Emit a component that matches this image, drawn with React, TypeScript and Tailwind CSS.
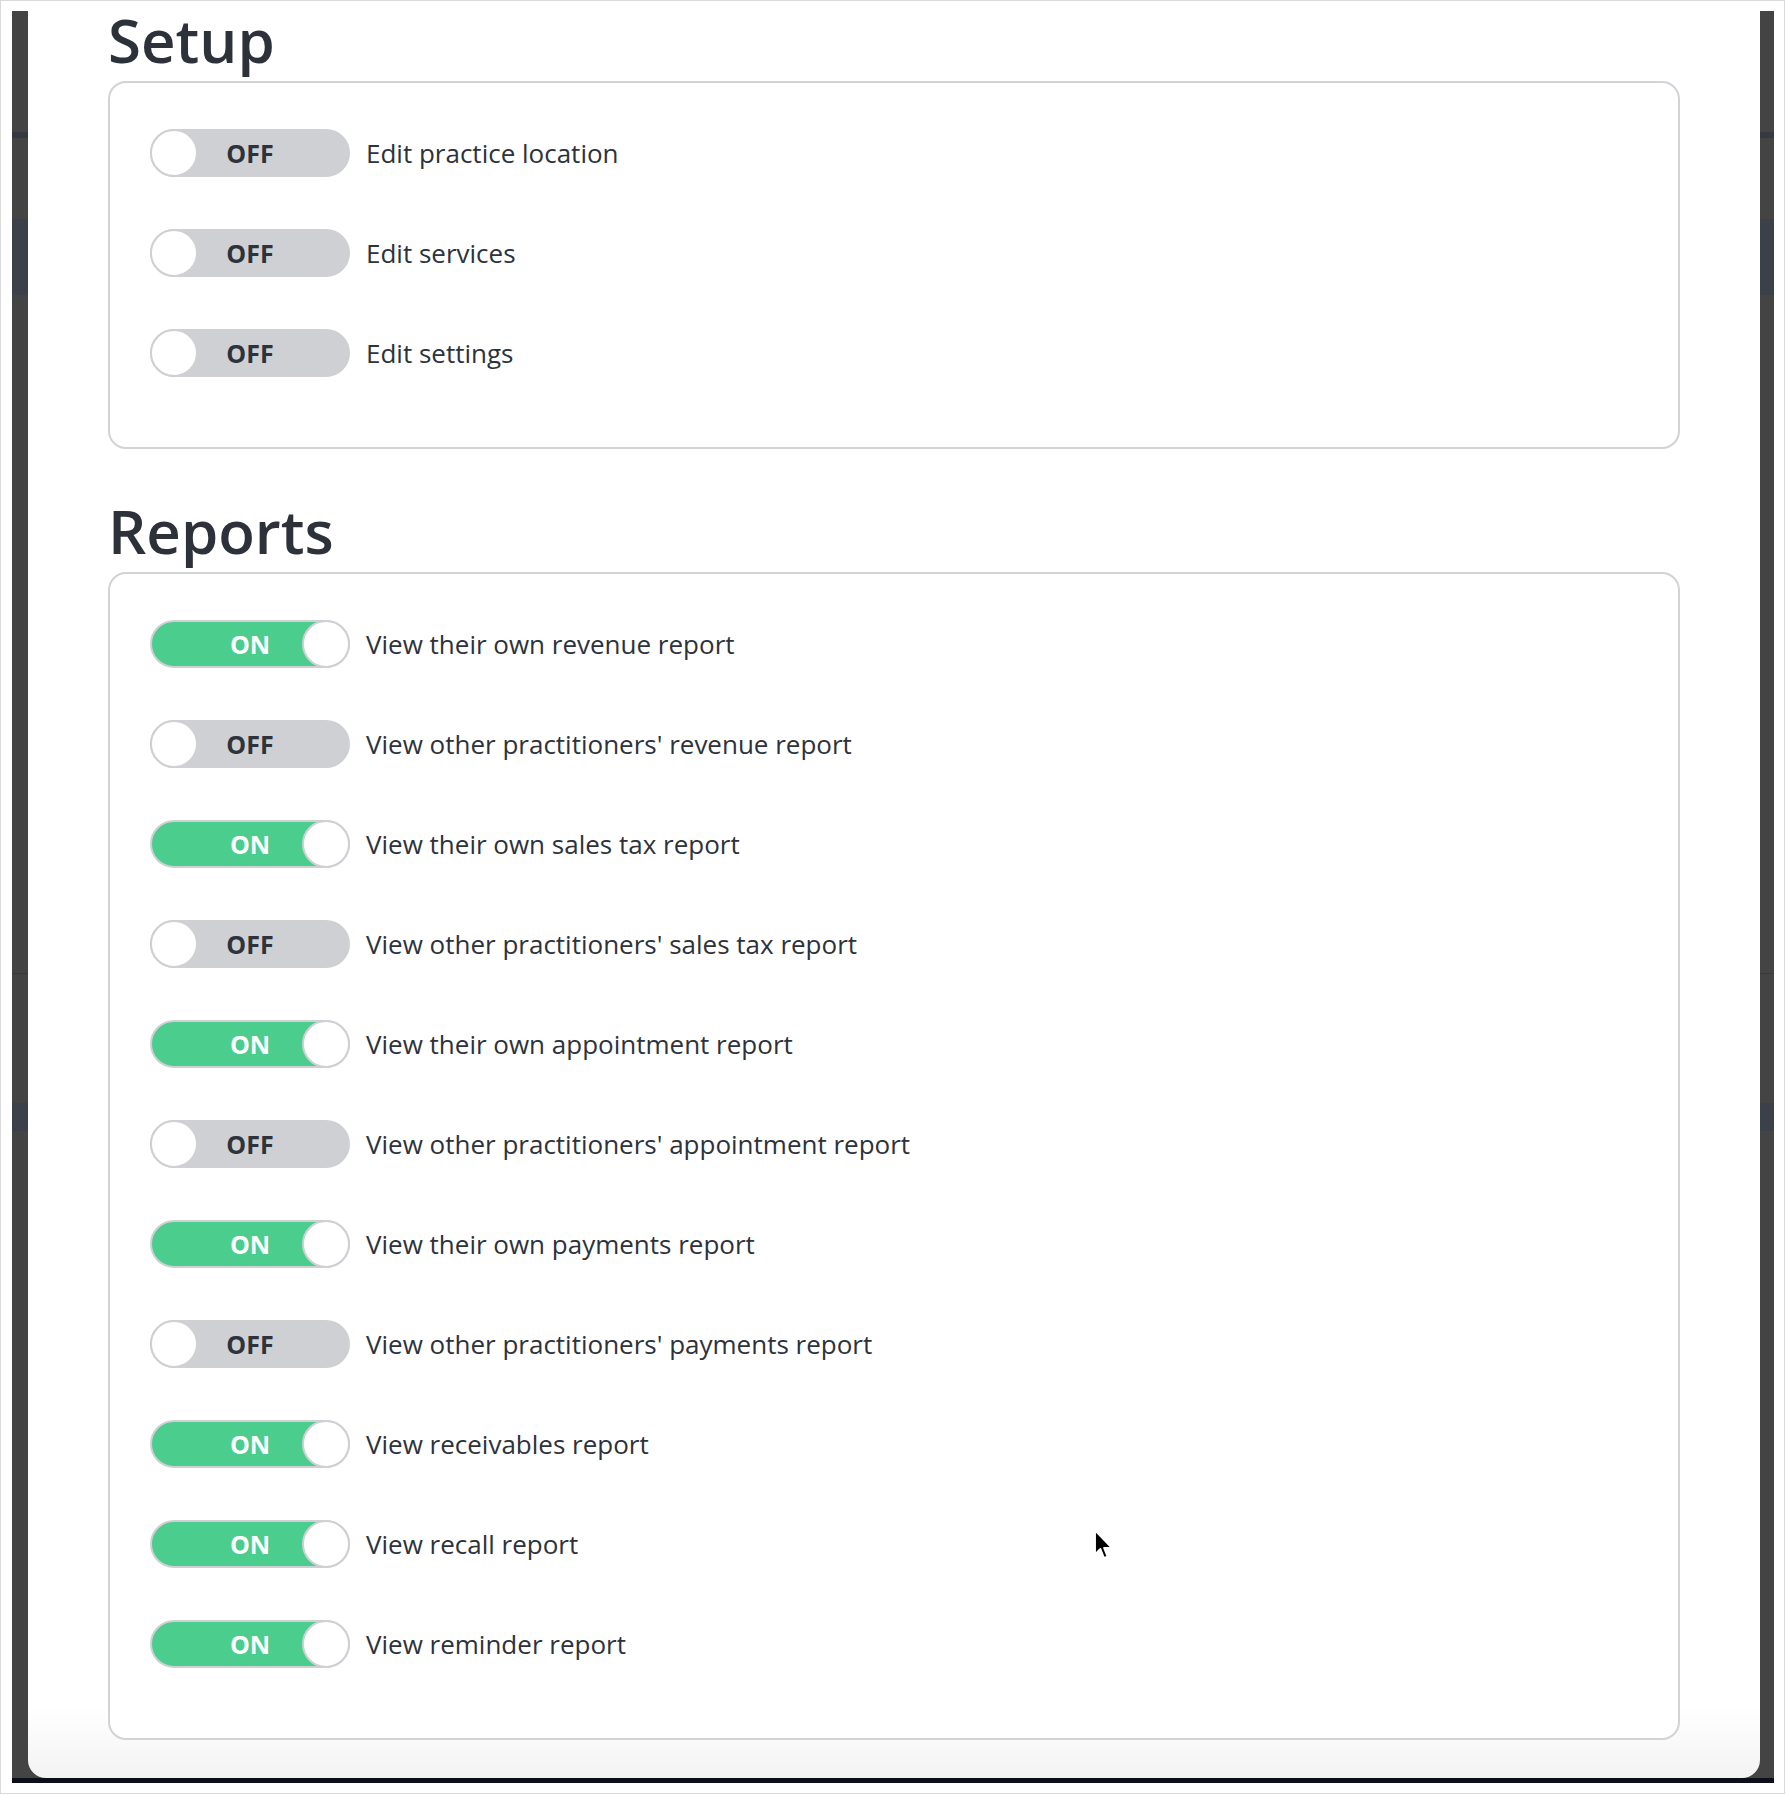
const setup = [
  { label: "Edit practice location", on: false },
  { label: "Edit services", on: false },
  { label: "Edit settings", on: false },
];

const reports = [
  { label: "View their own revenue report", on: true },
  { label: "View other practitioners' revenue report", on: false },
  { label: "View their own sales tax report", on: true },
  { label: "View other practitioners' sales tax report", on: false },
  { label: "View their own appointment report", on: true },
  { label: "View other practitioners' appointment report", on: false },
  { label: "View their own payments report", on: true },
  { label: "View other practitioners' payments report", on: false },
  { label: "View receivables report", on: true },
  { label: "View recall report", on: true },
  { label: "View reminder report", on: true },
];

function Toggle({ on }: { on: boolean }) {
  return (
    <div
      className={
        "relative flex h-12 w-[200px] shrink-0 items-center justify-center rounded-full border-2 border-[#cfd0d4] " +
        (on ? "bg-[#4bcd8e]" : "bg-[#cfd0d4]")
      }
    >
      <span
        className={
          "text-[25px] font-bold leading-none " + (on ? "text-white" : "text-[#2d323b]")
        }
      >
        {on ? "ON" : "OFF"}
      </span>
      <span
        className={
          "absolute top-[-2px] size-12 rounded-full border-2 border-[#cfd0d4] bg-white " +
          (on ? "right-[-2px]" : "left-[-2px]")
        }
      />
    </div>
  );
}

function Section({ title, items, className = "" }: { title: string; items: { label: string; on: boolean }[]; className?: string }) {
  return (
    <section className={className}>
      <h2 className="text-[60px] font-semibold leading-[58px] text-[#2d3139]">{title}</h2>
      <div className="mt-3 flex flex-col gap-[52px] rounded-[18px] border-2 border-[#d2d3d7] bg-white pl-[40px] pt-[46px] pb-[70px]">
        {items.map((it) => (
          <div key={it.label} className="flex items-center gap-4">
            <Toggle on={it.on} />
            <span className="text-[26px] text-[#2d323b]">{it.label}</span>
          </div>
        ))}
      </div>
    </section>
  );
}

function Strip({ width }: { width: string }) {
  return (
    <div className={"flex shrink-0 flex-col bg-[#444444] " + width}>
      <div className="h-[121px]" />
      <div className="h-[6px] bg-[#343942]" />
      <div className="h-[81px]" />
      <div className="h-[76px] bg-[#3b4049]" />
      <div className="h-[678px]" />
      <div className="h-[1px] bg-[#3a3a3a]" />
      <div className="h-[129px]" />
      <div className="h-[28px] bg-[#3b4049]" />
    </div>
  );
}

export default function App() {
  return (
    <div className="h-[1796px] w-[1786px] bg-white" style={{ fontFamily: '"Open Sans", "Liberation Sans", sans-serif' }}>
      <div className="relative h-[1794px] w-[1785px] border border-[#d9d9d9] pl-[11px] pt-[10px]">
        <div className="flex h-[1772px] w-[1762px] flex-col bg-[#444444]">
          <div className="flex h-[1767px]">
            <Strip width="w-4" />
            <div className="flex-1 rounded-b-[18px] bg-linear-to-b from-white from-[96%] to-[#f3f3f3] px-20">
              <Section title="Setup" items={setup} />
              <Section title="Reports" items={reports} className="mt-[53px]" />
            </div>
            <Strip width="w-[14px]" />
          </div>
          <div className="h-[5px] bg-[#0b0f1a]" />
        </div>
        <svg
          className="absolute left-[1091px] top-[1527px]"
          width="24"
          height="36"
          viewBox="0 0 20 30"
        >
          <path
            d="M2.5 2 L2.5 22 L7 17.5 L10 25 L13 23.8 L10.1 16.6 L16.5 16.6 Z"
            fill="#000"
            stroke="#fff"
            strokeWidth="1.6"
            strokeLinejoin="round"
          />
        </svg>
      </div>
    </div>
  );
}
